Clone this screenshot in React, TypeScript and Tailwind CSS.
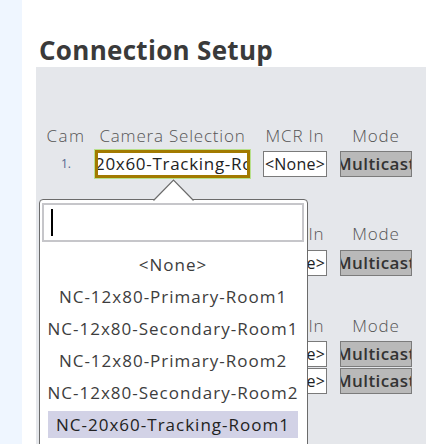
import React from "react";

const FONT = { fontFamily: '"Open Sans", "Noto Sans", sans-serif' };

const options = [
    "<None>",
    "NC-12x80-Primary-Room1",
    "NC-12x80-Secondary-Room1",
    "NC-12x80-Primary-Room2",
    "NC-12x80-Secondary-Room2",
    "NC-20x60-Tracking-Room1",
];

function HeaderRow() {
    return (
        <div className="flex h-[24px] items-center whitespace-nowrap text-[17px] font-light tracking-[0.8px] text-[#555]">
            <div className="w-[40px] text-center tracking-[1.5px]">Cam</div>
            <div className="ml-[8px] w-[157px] text-center">Camera Selection</div>
            <div className="ml-[12px] w-[64px] text-center">MCR In</div>
            <div className="ml-[13px] w-[72px] text-center">Mode</div>
        </div>
    );
}

function CamRow({ num, camera, focused }: { num: string; camera: string; focused?: boolean }) {
    return (
        <div className="flex h-[26px] items-center">
            <div className="w-[40px] text-center text-[12px] text-[#56698f]">{num}</div>
            {focused ? (
                <div className="ml-[8px] h-[30px] w-[157px] shrink-0 border border-[#b8e08c]">
                    <div className="flex h-full items-center overflow-hidden whitespace-nowrap border-[3px] border-[#a27a00] bg-white text-[17px] tracking-[0.7px] text-[#222]">
                        <span className="-ml-[3px]">{camera}</span>
                    </div>
                </div>
            ) : (
                <div className="ml-[8px] flex h-[26px] w-[157px] shrink-0 items-center overflow-hidden whitespace-nowrap border border-[#7a7a7a] bg-white px-[2px] text-[16px] text-[#222]">
                    {camera}
                </div>
            )}
            <div className="ml-[12px] flex h-[26px] w-[64px] shrink-0 items-center justify-center overflow-hidden whitespace-nowrap border border-[#7a7a7a] bg-white text-[16px] font-medium tracking-[0.2px] text-[#222]">
                &lt;None&gt;
            </div>
            <div className="ml-[13px] flex h-[26px] w-[72px] shrink-0 items-center overflow-hidden whitespace-nowrap border border-[#7b7b7b] bg-[#b9b9b9] text-[17px] font-semibold text-[#333]">
                <span className="-ml-[5px] tracking-[0.4px]">Multicast</span>
            </div>
        </div>
    );
}

function Popup() {
    return (
        <div className="absolute left-[3px] top-[132px] z-10 h-[300px] w-[269px] rounded-tl-[4px] rounded-tr-[4px] border border-[#6b6b6b] bg-white">
            {/* pointer arrow */}
            <svg
                className="absolute left-[113px] top-[-21px]"
                width="42"
                height="22"
                viewBox="0 0 42 22"
            >
                <polygon points="0,22 20.5,1 41,22" fill="#ffffff" />
                <path d="M0.5 21.5 L20.5 1 L40.5 21.5" fill="none" stroke="#6b6b6b" strokeWidth="1.2" />
            </svg>

            {/* search box */}
            <div className="ml-[2px] mr-[3px] mt-[3px] flex h-[39px] items-center border-2 border-[#c6c6ca] pl-[7px]">
                <div className="h-[27px] w-[2px] bg-black" />
            </div>

            <div className="mt-[9px] flex flex-col gap-[5px]">
                {options.map((o, i) => (
                    <div
                        key={o}
                        className={
                            i === options.length - 1
                                ? "ml-[8px] mr-[9px] flex h-[27px] items-center justify-center whitespace-nowrap bg-[#d2d2e6] text-[17px] tracking-[1px] text-[#222]"
                                : "ml-[8px] mr-[9px] flex h-[27px] items-center justify-center whitespace-nowrap text-[17px] tracking-[1px] text-[#3d3d3d]"
                        }
                    >
                        {o}
                    </div>
                ))}
            </div>
        </div>
    );
}

export default function App() {
    return (
        <div className="flex h-[444px] w-[426px] overflow-hidden bg-white" style={FONT}>
            <div className="w-[22px] shrink-0 bg-[#eff6ff]" />
            <div className="flex flex-1 flex-col pl-[14px]">
                <h2 className="h-[67px] pl-[3px] pt-[35px] text-[26px] font-bold leading-[30px] tracking-[0.3px] text-[#3a3a3a]">
                    Connection Setup
                </h2>
                <div className="relative flex-1 bg-[#e5e7eb] pl-[10px] pt-[57px]">
                    <HeaderRow />
                    <div className="mt-[3px]">
                        <CamRow num="1." camera="20x60-Tracking-Room1" focused />
                    </div>

                    <div className="mt-[45px]">
                        <HeaderRow />
                        <div className="mt-[4px]">
                            <CamRow num="1." camera="<None>" />
                        </div>
                    </div>

                    <div className="mt-[38px]">
                        <HeaderRow />
                        <div className="mt-[3px] flex flex-col gap-[1px]">
                            <CamRow num="1." camera="<None>" />
                            <CamRow num="2." camera="<None>" />
                        </div>
                    </div>

                    <Popup />
                </div>
            </div>
        </div>
    );
}
